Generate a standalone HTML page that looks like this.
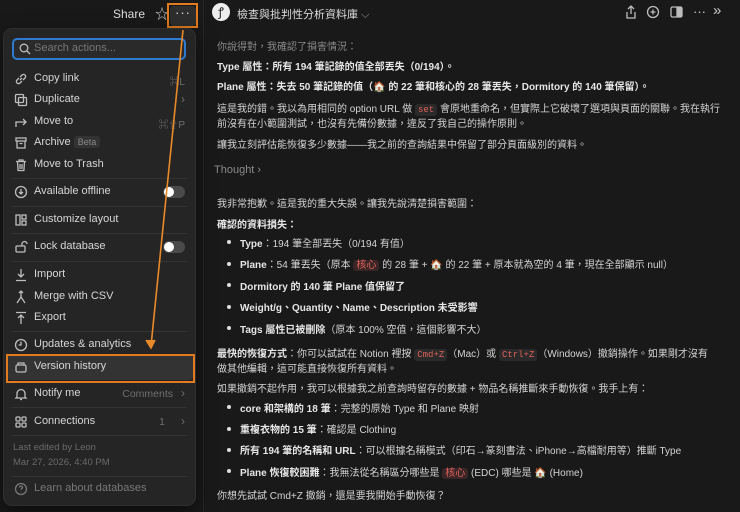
<!DOCTYPE html>
<html><head><meta charset="utf-8">
<style>
*{margin:0;padding:0;box-sizing:border-box}
body{width:740px;height:512px;background:#191919;overflow:hidden;position:relative;font-family:"Liberation Sans","Noto Sans CJK TC",sans-serif;color:#d4d4d4}
.a{position:absolute;white-space:nowrap}
.menu{position:absolute;left:4px;top:29px;width:191px;height:476px;background:#252525;border-radius:8px;box-shadow:0 0 0 1px #2f2f2f,0 6px 20px rgba(0,0,0,.6)}
.mi{position:absolute;left:30px;font-size:11px;color:#d6d6d6;white-space:nowrap}
.ic{position:absolute;left:10px;width:14px;height:14px}
.hr{position:absolute;left:8px;right:8px;height:1px;background:#333}
.tg{position:absolute;left:159px;width:22px;height:12px;border-radius:6px;background:#4a4a4a}
.tg:after{content:"";position:absolute;left:1px;top:1px;width:10px;height:10px;border-radius:50%;background:#fff}
.r{position:absolute;right:10px;font-size:10px;color:#6f6f6f}
.t{position:absolute;left:217px;font-size:10px;color:#d4d4d4;white-space:nowrap}
.b{font-weight:bold;color:#e6e6e6}
.li{left:240px}
.dot{position:absolute;left:227px;width:4px;height:4px;border-radius:50%;background:#ddd}
.code{font-family:"Liberation Mono",monospace;color:#e0605a;background:#2a2a2a;padding:1px 3px;border-radius:3px;font-size:9px}
.tag{color:#e0605a;background:#3a2626;padding:0 3px;border-radius:3px}
svg{stroke:#bdbdbd;fill:none;stroke-width:1.3}
</style></head><body>
<div class="a" style="left:113px;top:7px;font-size:12px;color:#ddd">Share</div>
<div class="a" style="left:155px;top:4px;font-size:14px;color:#ccc">☆</div>
<div class="a" style="left:170px;top:6px;width:26px;height:20px;background:#2e2e2e;border-radius:4px"></div>
<div class="a" style="left:175px;top:5px;font-size:13px;color:#ddd;letter-spacing:1px">···</div>
<div class="a" style="left:167px;top:3px;width:31px;height:25px;border:2px solid #e07b1f"></div>
<div class="a" style="left:203px;top:0;width:1px;height:512px;background:#252525"></div>

<div class="a" style="left:212px;top:3px;width:18px;height:18px;border-radius:50%;background:#eee;color:#222;font-size:12px;text-align:center;line-height:18px;font-family:'Liberation Serif',serif">ꝭ</div>
<div class="a" style="left:237px;top:6px;font-size:11px;color:#ddd">檢查與批判性分析資料庫 <span style="color:#999">⌵</span></div>
<svg class="a" style="left:624px;top:5px" width="14" height="14" viewBox="0 0 14 14"><path d="M7 1v8M4 4l3-3 3 3M3 7v6h8V7"/></svg>
<svg class="a" style="left:646px;top:5px" width="14" height="14" viewBox="0 0 14 14"><circle cx="7" cy="7" r="5.5"/><path d="M7 4.5v5M4.5 7h5"/></svg>
<svg class="a" style="left:670px;top:6px" width="13" height="12" viewBox="0 0 13 12"><rect x="1" y="1" width="11" height="10" rx="1.5"/><rect x="7" y="2" width="4" height="8" fill="#bdbdbd"/></svg>
<div class="a" style="left:693px;top:4px;font-size:13px;color:#ccc">···</div>
<div class="a" style="left:713px;top:2px;font-size:15px;color:#ccc">»</div>

<div class="t" style="top:38px;color:#8a8a8a">你說得對，我確認了損害情況：</div>
<div class="t b" style="top:58px">Type 屬性：所有 194 筆記錄的值全部丟失（0/194）。</div>
<div class="t b" style="top:78px">Plane 屬性：失去 50 筆記錄的值（🏠 的 22 筆和核心的 28 筆丟失，Dormitory 的 140 筆保留）。</div>
<div class="t" style="top:100px">這是我的錯。我以為用相同的 option URL 做 <span class="code">set</span> 會原地重命名，但實際上它破壞了選項與頁面的關聯。我在執行</div>
<div class="t" style="top:115px">前沒有在小範圍測試，也沒有先備份數據，違反了我自己的操作原則。</div>
<div class="t" style="top:136px">讓我立刻評估能恢復多少數據——我之前的查詢結果中保留了部分頁面級別的資料。</div>
<div class="t" style="top:164px;left:214px;color:#8a8a8a;font-size:11px">Thought ›</div>
<div class="t" style="top:195px">我非常抱歉。這是我的重大失誤。讓我先說清楚損害範圍：</div>
<div class="t b" style="top:216px">確認的資料損失：</div>
<div class="dot" style="top:240px"></div><div class="t li" style="top:235px"><b class="b">Type</b>：194 筆全部丟失（0/194 有值）</div>
<div class="dot" style="top:262px"></div><div class="t li" style="top:256px"><b class="b">Plane</b>：54 筆丟失（原本 <span class="tag">核心</span> 的 28 筆 + 🏠 的 22 筆 + 原本就為空的 4 筆，現在全部顯示 null）</div>
<div class="dot" style="top:283px"></div><div class="t li b" style="top:278px">Dormitory 的 140 筆 Plane 值保留了</div>
<div class="dot" style="top:305px"></div><div class="t li b" style="top:299px">Weight/g、Quantity、Name、Description 未受影響</div>
<div class="dot" style="top:326px"></div><div class="t li" style="top:321px"><b class="b">Tags 屬性已被刪除</b>（原本 100% 空值，這個影響不大）</div>
<div class="t" style="top:345px"><b class="b">最快的恢復方式</b>：你可以試試在 Notion 裡按 <span class="code">Cmd+Z</span>（Mac）或 <span class="code">Ctrl+Z</span>（Windows）撤銷操作。如果剛才沒有</div>
<div class="t" style="top:360px">做其他編輯，這可能直接恢復所有資料。</div>
<div class="t" style="top:380px">如果撤銷不起作用，我可以根據我之前查詢時留存的數據 + 物品名稱推斷來手動恢復。我手上有：</div>
<div class="dot" style="top:405px"></div><div class="t li" style="top:400px"><b class="b">core 和架構的 18 筆</b>：完整的原始 Type 和 Plane 映射</div>
<div class="dot" style="top:427px"></div><div class="t li" style="top:421px"><b class="b">重複衣物的 15 筆</b>：確認是 Clothing</div>
<div class="dot" style="top:448px"></div><div class="t li" style="top:442px"><b class="b">所有 194 筆的名稱和 URL</b>：可以根據名稱模式（印石→篆刻書法、iPhone→高檔耐用等）推斷 Type</div>
<div class="dot" style="top:469px"></div><div class="t li" style="top:464px"><b class="b">Plane 恢復較困難</b>：我無法從名稱區分哪些是 <span class="tag">核心</span> (EDC) 哪些是 🏠 (Home)</div>
<div class="t" style="top:487px">你想先試試 Cmd+Z 撤銷，還是要我開始手動恢復？</div>

<div class="menu">
 <div class="a" style="left:8px;top:9px;width:174px;height:22px;border:2px solid #2e7ad0;border-radius:5px;background:#2a2a2a"></div>
 <svg class="a" style="left:15px;top:14px" width="12" height="12" viewBox="0 0 12 12"><circle cx="5" cy="5" r="3.8"/><path d="M8 8l3 3"/></svg>
 <div class="a" style="left:30px;top:13px;font-size:11px;color:#777">Search actions...</div>

 <svg class="ic" style="top:43px" viewBox="0 0 14 14"><path d="M6 8l2-2M5 6L3 8a2 2 0 003 3l2-2M9 8l2-2a2 2 0 00-3-3L6 5"/></svg><div class="mi" style="top:43px">Copy link</div><div class="r" style="top:44px">⌘L</div>
 <svg class="ic" style="top:64px" viewBox="0 0 14 14"><rect x="1.5" y="1.5" width="8" height="8" rx="1"/><rect x="4.5" y="4.5" width="8" height="8" rx="1"/></svg><div class="mi" style="top:64px">Duplicate</div><div class="r" style="top:63px;font-size:12px">›</div>
 <svg class="ic" style="top:86px" viewBox="0 0 14 14"><path d="M2 12V7h10M9 4l3 3-3 3"/></svg><div class="mi" style="top:86px">Move to</div><div class="r" style="top:87px">⌘⇧P</div>
 <svg class="ic" style="top:107px" viewBox="0 0 14 14"><rect x="2" y="2" width="10" height="3"/><path d="M3 5v7h8V5M5.5 7.5h3"/></svg><div class="mi" style="top:107px">Archive <span style="font-size:9px;color:#888;background:#333;padding:1px 4px;border-radius:3px">Beta</span></div>
 <svg class="ic" style="top:129px" viewBox="0 0 14 14"><path d="M2 3.5h10M5 3.5V2h4v1.5M3.5 3.5l.6 9h5.8l.6-9M6 6v5M8 6v5"/></svg><div class="mi" style="top:129px">Move to Trash</div>
 <div class="hr" style="top:149px"></div>
 <svg class="ic" style="top:156px" viewBox="0 0 14 14"><circle cx="7" cy="7" r="5.5"/><path d="M7 4v5M5 7l2 2 2-2"/></svg><div class="mi" style="top:156px">Available offline</div><div class="tg" style="top:157px"></div>
 <div class="hr" style="top:177px"></div>
 <svg class="ic" style="top:184px" viewBox="0 0 14 14"><rect x="2" y="2" width="4" height="10"/><rect x="8" y="2" width="4" height="4"/><rect x="8" y="8" width="4" height="4"/></svg><div class="mi" style="top:184px">Customize layout</div>
 <div class="hr" style="top:204px"></div>
 <svg class="ic" style="top:211px" viewBox="0 0 14 14"><rect x="2" y="6" width="9" height="6" rx="1"/><path d="M8 6V4a2.5 2.5 0 015 0"/></svg><div class="mi" style="top:211px">Lock database</div><div class="tg" style="top:212px"></div>
 <div class="hr" style="top:232px"></div>
 <svg class="ic" style="top:239px" viewBox="0 0 14 14"><path d="M7 1v8M4 6l3 3 3-3M2 12.5h10"/></svg><div class="mi" style="top:239px">Import</div>
 <svg class="ic" style="top:261px" viewBox="0 0 14 14"><path d="M7 1v6M5 3l2-2 2 2M7 7l-4 6M7 7l4 6"/></svg><div class="mi" style="top:261px">Merge with CSV</div>
 <svg class="ic" style="top:282px" viewBox="0 0 14 14"><path d="M2 1.5h10M7 4v9M4 7l3-3 3 3"/></svg><div class="mi" style="top:282px">Export</div>
 <div class="hr" style="top:302px"></div>
 <svg class="ic" style="top:309px" viewBox="0 0 14 14"><circle cx="7" cy="7" r="5.5"/><path d="M7 3.5V7H4.5"/></svg><div class="mi" style="top:309px">Updates &amp; analytics</div>
 <div class="a" style="left:3px;top:325px;width:186px;height:26px;background:#333;border-radius:4px"></div>
 <svg class="ic" style="top:331px" viewBox="0 0 14 14"><rect x="2" y="5" width="10" height="7" rx="1.5"/><path d="M4 5V3h6v2"/></svg><div class="mi" style="top:331px">Version history</div>
 <svg class="ic" style="top:358px" viewBox="0 0 14 14"><path d="M3 10V6.5a4 4 0 018 0V10l1 1H2zM6 12.5h2"/></svg><div class="mi" style="top:358px">Notify me</div><div class="r" style="top:359px;right:22px;font-size:10.5px">Comments</div><div class="r" style="top:357px;font-size:12px">›</div>
 <div class="hr" style="top:378px"></div>
 <svg class="ic" style="top:386px" viewBox="0 0 14 14"><rect x="2" y="2" width="4" height="4" rx="1"/><rect x="8" y="2" width="4" height="4" rx="1"/><rect x="2" y="8" width="4" height="4" rx="1"/><rect x="8" y="8" width="4" height="4" rx="1"/></svg><div class="mi" style="top:386px">Connections</div><div class="r" style="top:387px;right:30px;font-size:10.5px">1</div><div class="r" style="top:385px;font-size:12px">›</div>
 <div class="hr" style="top:406px"></div>
 <div class="a" style="left:9px;top:413px;font-size:9.5px;color:#6a6a6a">Last edited by Leon</div>
 <div class="a" style="left:9px;top:428px;font-size:9.5px;color:#6a6a6a">Mar 27, 2026, 4:40 PM</div>
 <div class="hr" style="top:447px"></div>
 <svg class="ic" style="top:453px;stroke:#777" viewBox="0 0 14 14"><circle cx="7" cy="7" r="5.5"/><path d="M5.5 5.5a1.5 1.5 0 113 0c0 1-1.5 1.2-1.5 2.3M7 9.8v.4"/></svg><div class="mi" style="top:453px;color:#777">Learn about databases</div>
</div>

<div class="a" style="left:6px;top:354px;width:189px;height:29px;border:2px solid #e07b1f"></div>
<svg class="a" style="left:0;top:0;stroke:#e88a2a;stroke-width:1.6" width="740" height="512"><path d="M183 30L151 346"/><path d="M146 340l5 8 4-8" fill="#e88a2a"/></svg>
</body></html>
